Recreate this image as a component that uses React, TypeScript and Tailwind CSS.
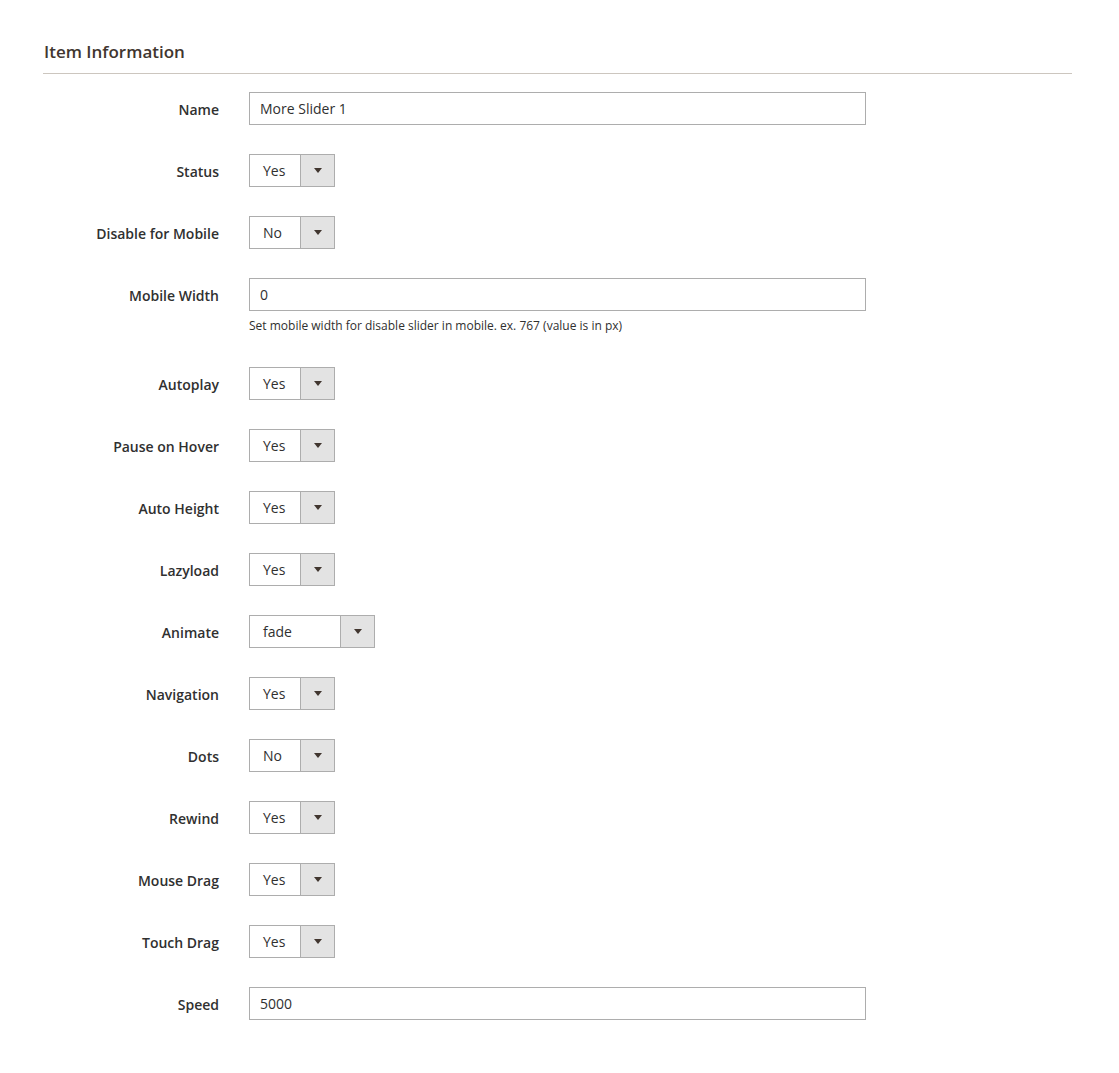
const font = { fontFamily: '"Open Sans", "Liberation Sans", sans-serif' };

type Row =
  | { label: string; kind: "text"; value: string; note?: string }
  | { label: string; kind: "select"; value: string; wide?: boolean };

const rows: Row[] = [
  { label: "Name", kind: "text", value: "More Slider 1" },
  { label: "Status", kind: "select", value: "Yes" },
  { label: "Disable for Mobile", kind: "select", value: "No" },
  {
    label: "Mobile Width",
    kind: "text",
    value: "0",
    note: "Set mobile width for disable slider in mobile. ex. 767 (value is in px)",
  },
  { label: "Autoplay", kind: "select", value: "Yes" },
  { label: "Pause on Hover", kind: "select", value: "Yes" },
  { label: "Auto Height", kind: "select", value: "Yes" },
  { label: "Lazyload", kind: "select", value: "Yes" },
  { label: "Animate", kind: "select", value: "fade", wide: true },
  { label: "Navigation", kind: "select", value: "Yes" },
  { label: "Dots", kind: "select", value: "No" },
  { label: "Rewind", kind: "select", value: "Yes" },
  { label: "Mouse Drag", kind: "select", value: "Yes" },
  { label: "Touch Drag", kind: "select", value: "Yes" },
  { label: "Speed", kind: "text", value: "5000" },
];

function Select({ value, wide }: { value: string; wide?: boolean }) {
  return (
    <div className={`flex h-[33px] border border-[#adadad] bg-white ${wide ? "w-[126px]" : "w-[86px]"}`}>
      <div className="flex flex-1 items-center pl-[13px] text-[14px] text-[#303030]">{value}</div>
      <div className="flex w-[34px] items-center justify-center border-l border-[#adadad] bg-[#e3e3e3]">
        <span className="block h-0 w-0 border-x-[4px] border-t-[5px] border-x-transparent border-t-[#41362f]" />
      </div>
    </div>
  );
}

export default function App() {
  return (
    <div className="min-h-screen bg-white pt-[40px]" style={font}>
      <div className="mx-[43px] w-[1029px]">
        <div className="border-b border-[#ccc6bf] pb-[9px] pl-px">
          <h2 className="text-[17px] font-semibold leading-[24px] text-[#41362f]">Item Information</h2>
        </div>

        <div className="pt-[18px]">
          {rows.map((r) => (
            <div key={r.label} className={`flex gap-[30px] ${r.kind === "text" && r.note ? "mb-[33px]" : "mb-[29px]"}`}>
              <label className="w-[176px] pt-[8px] text-right text-[14px] font-semibold leading-[19px] text-[#303030]">
                {r.label}
              </label>
              <div>
                {r.kind === "text" ? (
                  <>
                    <div className="flex h-[33px] w-[617px] items-center border border-[#adadad] bg-white pl-[10px] text-[14px] text-[#303030]">
                      {r.value}
                    </div>
                    {r.note && (
                      <div className="mt-[6px] text-[12px] leading-[17px] text-[#303030]">{r.note}</div>
                    )}
                  </>
                ) : (
                  <Select value={r.value} wide={r.wide} />
                )}
              </div>
            </div>
          ))}
        </div>
      </div>
    </div>
  );
}
